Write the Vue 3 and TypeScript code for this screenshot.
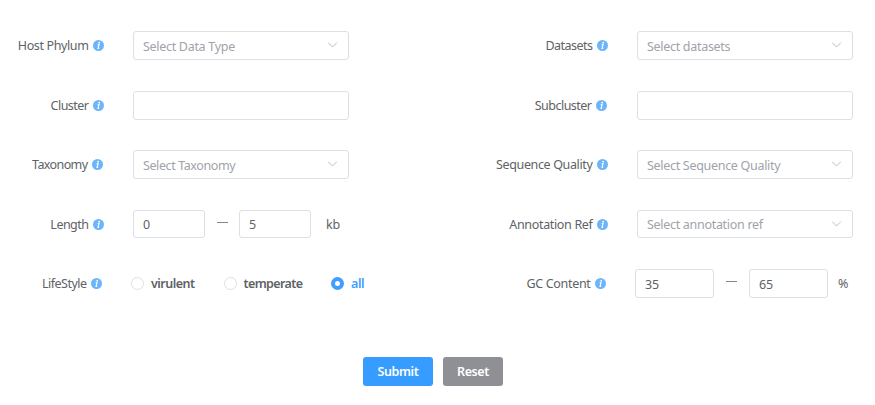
<script setup lang="ts">
import { ref } from 'vue'

interface Field {
  key: string
  label: string
  kind: 'select' | 'input' | 'range' | 'radio'
  placeholder?: string
  unit?: string
}

const columns: Field[][] = [
  [
    { key: 'phylum', label: 'Host Phylum', kind: 'select', placeholder: 'Select Data Type' },
    { key: 'cluster', label: 'Cluster', kind: 'input' },
    { key: 'taxonomy', label: 'Taxonomy', kind: 'select', placeholder: 'Select Taxonomy' },
    { key: 'length', label: 'Length', kind: 'range', unit: 'kb' },
    { key: 'lifestyle', label: 'LifeStyle', kind: 'radio' },
  ],
  [
    { key: 'datasets', label: 'Datasets', kind: 'select', placeholder: 'Select datasets' },
    { key: 'subcluster', label: 'Subcluster', kind: 'input' },
    { key: 'quality', label: 'Sequence Quality', kind: 'select', placeholder: 'Select Sequence Quality' },
    { key: 'annotation', label: 'Annotation Ref', kind: 'select', placeholder: 'Select annotation ref' },
    { key: 'gc', label: 'GC Content', kind: 'range', unit: '%' },
  ],
]

const text = ref<Record<string, string>>({ cluster: '', subcluster: '' })
const ranges = ref<Record<string, string[]>>({ length: ['0', '5'], gc: ['35', '65'] })
const lifestyles = ['virulent', 'temperate', 'all']
const lifestyle = ref('all')
</script>

<template>
  <form class="search" @submit.prevent>
    <div class="columns">
      <div v-for="(fields, c) in columns" :key="c" class="column">
        <div v-for="f in fields" :key="f.key" class="row" :class="'row-' + f.key">
          <div class="label">
            <span>{{ f.label }}</span>
            <svg class="info" viewBox="0 0 11 11">
              <circle cx="5.5" cy="5.5" r="5.5" fill="#6db5fb" />
              <circle cx="6.2" cy="2.7" r="0.9" fill="#fff" />
              <path d="M4.7 4.6H6L5.1 8.4H6.1" fill="none" stroke="#fff" stroke-width="1.15" />
            </svg>
          </div>
          <div v-if="f.kind === 'select'" class="box select">
            <span>{{ f.placeholder }}</span>
            <svg class="chevron" viewBox="0 0 10 6">
              <path d="M.7 .7L5 5L9.3 .7" fill="none" stroke="#b8bbc2" stroke-width="0.95" />
            </svg>
          </div>
          <input v-else-if="f.kind === 'input'" v-model="text[f.key]" class="box" />
          <div v-else-if="f.kind === 'range'" class="range">
            <input v-model="ranges[f.key][0]" class="box" />
            <i class="dash"></i>
            <input v-model="ranges[f.key][1]" class="box" />
            <span class="unit">{{ f.unit }}</span>
          </div>
          <div v-else class="radios">
            <div
              v-for="l in lifestyles"
              :key="l"
              class="radio"
              :class="['radio-' + l, { checked: l === lifestyle }]"
              @click="lifestyle = l"
            >
              <i class="dot"></i>
              <span>{{ l }}</span>
            </div>
          </div>
        </div>
      </div>
    </div>
    <div class="actions">
      <button class="btn submit">Submit</button>
      <button class="btn reset">Reset</button>
    </div>
  </form>
</template>

<style>
body {
  background: #fff;
}
</style>

<style scoped>
.search {
  box-sizing: border-box;
  width: 875px;
  height: 405px;
  padding-top: 16px;
  overflow: hidden;
  font-family: 'Noto Sans', 'Open Sans', sans-serif;
  font-size: 12.5px;
  line-height: 18px;
  color: #606266;
}
.columns {
  display: grid;
  grid-template-columns: 504px 371px;
}
.row {
  display: flex;
  align-items: center;
  height: 59.5px;
}
.label {
  display: flex;
  flex: none;
  align-items: center;
  justify-content: flex-end;
  gap: 4.5px;
  width: 104px;
  margin-right: 29px;
  letter-spacing: -0.38px;
  white-space: nowrap;
}
.row-cluster .label span,
.row-subcluster .label span,
.row-length .label span,
.row-annotation .label span {
  padding-top: 1px;
}
.row-taxonomy .label,
.row-subcluster .label {
  width: 103px;
  margin-right: 30px;
}
.row-cluster .label,
.row-length .label,
.row-lifestyle .label,
.row-datasets .label,
.row-subcluster .label {
  letter-spacing: -0.52px;
}
.row-taxonomy .label {
  letter-spacing: -0.6px;
}
.row-lifestyle .label {
  width: 102px;
  margin-right: 29px;
}
.row-gc .label {
  width: 102px;
  margin-right: 29px;
  letter-spacing: -0.32px;
}
.row-annotation .label {
  letter-spacing: -0.34px;
}
.row-quality .label {
  letter-spacing: -0.36px;
}
.info {
  flex: none;
  width: 11px;
  height: 11px;
}
.box {
  box-sizing: border-box;
  width: 216px;
  height: 29px;
  margin: 0;
  padding: 1px 9px 0;
  border: 1px solid #dcdfe6;
  border-radius: 3px;
  outline: none;
  background: #fff;
  color: #606266;
  font: inherit;
  letter-spacing: -0.2px;
}
.row-length .box,
.row-annotation .box {
  height: 28px;
}
.select {
  display: flex;
  align-items: center;
  justify-content: space-between;
  padding-right: 10px;
  color: #a0a3aa;
  letter-spacing: -0.3px;
}
.row-taxonomy .select {
  letter-spacing: -0.4px;
}
.row-phylum .select span,
.row-datasets .select span,
.row-taxonomy .select span,
.row-quality .select span {
  padding-top: 2px;
}
.chevron {
  width: 11px;
  height: 6px;
  margin-top: -2px;
}
.range,
.radios,
.radio {
  display: flex;
  align-items: center;
}
.range .box {
  width: 72px;
}
.dash {
  width: 11px;
  height: 1px;
  margin: 0 11px 4px 12px;
  background: #85878b;
}
.unit {
  margin-left: 15px;
  letter-spacing: -0.2px;
}
.row-length .unit {
  padding-top: 1px;
}
.row-gc .box {
  width: 79px;
}
.row-gc .dash {
  margin-left: 12px;
  margin-right: 12px;
}
.row-gc .unit {
  margin-left: 10px;
}
.radio {
  gap: 7px;
  font-weight: 600;
  letter-spacing: -0.52px;
}
.radio-virulent {
  width: 92.5px;
}
.radio-temperate {
  width: 107.5px;
  letter-spacing: -0.6px;
}
.dot {
  box-sizing: border-box;
  flex: none;
  width: 13px;
  height: 13px;
  border: 1px solid #dcdfe6;
  border-radius: 50%;
  background: #fff;
}
.checked {
  color: #409eff;
  letter-spacing: -0.4px;
}
.checked .dot {
  border: 4.5px solid #409eff;
}
.actions {
  display: flex;
  gap: 10px;
  padding: 43.5px 0 0 363px;
}
.btn {
  height: 29px;
  padding: 0;
  border: 0;
  border-radius: 3px;
  color: #fff;
  font: inherit;
  font-weight: 600;
  letter-spacing: -0.4px;
}
.submit {
  width: 70px;
  background: #379cff;
}
.reset {
  width: 60px;
  background: #8f9096;
}
</style>
